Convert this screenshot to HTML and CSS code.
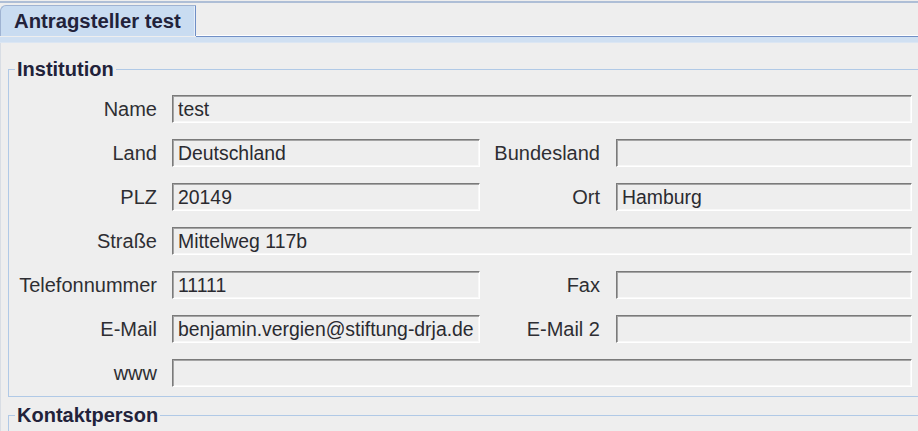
FILE: index.html
```html
<!DOCTYPE html>
<html lang="de">
<head>
<meta charset="utf-8">
<title>Antragsteller test</title>
<link rel="stylesheet" href="styles.css">
</head>
<body>
<div class="tabbar">
  <div class="tab">Antragsteller test</div>
  <div class="tabfill"></div>
</div>
<div class="tabstrip"></div>
<div class="panel">
  <fieldset class="group">
    <legend>Institution</legend>
    <div class="form">
      <label class="lbl">Name</label>
      <input class="field wide" readonly value="test">

      <label class="lbl">Land</label>
      <input class="field" readonly value="Deutschland">
      <label class="lbl lbl2">Bundesland</label>
      <input class="field" readonly value="">

      <label class="lbl">PLZ</label>
      <input class="field" readonly value="20149">
      <label class="lbl lbl2">Ort</label>
      <input class="field" readonly value="Hamburg">

      <label class="lbl">Straße</label>
      <input class="field wide" readonly value="Mittelweg 117b">

      <label class="lbl">Telefonnummer</label>
      <input class="field" readonly value="11111">
      <label class="lbl lbl2">Fax</label>
      <input class="field" readonly value="">

      <label class="lbl">E-Mail</label>
      <input class="field" readonly value="benjamin.vergien@stiftung-drja.de">
      <label class="lbl lbl2">E-Mail 2</label>
      <input class="field" readonly value="">

      <label class="lbl">www</label>
      <input class="field wide" readonly value="">
    </div>
  </fieldset>
  <fieldset class="group group2">
    <legend>Kontaktperson</legend>
    <div class="spacer"></div>
  </fieldset>
</div>
</body>
</html>
```

FILE: styles.css
```css
html, body {
  margin: 0;
  padding: 0;
  background: #eeeeee;
  overflow: hidden;
  width: 918px;
  height: 431px;
  font-family: "Liberation Sans", Arial, sans-serif;
}

.tabbar {
  display: flex;
  margin-top: 1px;
  border-top: 2px solid #aebed6;
  padding-top: 2px;
  height: 32px;
}

.tab {
  width: 196px;
  height: 31px;
  box-sizing: border-box;
  background: #c9dcf1;
  border-top: 1px solid #9fb3d2;
  border-left: 1px solid #9fb3d2;
  border-right: 1px solid #6f8fc6;
  border-top-left-radius: 6px;
  box-shadow: inset -1px 0 0 #e6eef8;
  font-weight: bold;
  font-size: 20.3px;
  line-height: 30px;
  color: #22223a;
  padding-left: 13px;
  white-space: nowrap;
}

.tabfill {
  flex: 1;
  border-bottom: 1px solid #7190c6;
  box-shadow: inset 0 -1px 0 #ffffff;
}

.tabstrip {
  height: 5px;
  background: #d0e0f2;
  border-bottom: 1px solid #dbe6f3;
}

.panel {
  padding: 14px 0 0 8px;
  box-shadow: inset 1px 0 0 #d8dde4;
}

.group {
  margin: 0;
  border: 1px solid #b0c9e6;
  padding: 14px 0 9px 6px;
  width: 940px;
  box-sizing: border-box;
}

.group legend {
  font-weight: bold;
  font-size: 20px;
  line-height: 24px;
  color: #22223a;
  padding: 0 2px;
}

.group2 {
  margin-top: 6px;
}

.spacer {
  height: 40px;
}

.form {
  display: grid;
  grid-template-columns: 157px 308px 136px 296px;
  grid-auto-rows: 28px;
  row-gap: 16px;
  align-items: center;
}

.lbl {
  text-align: right;
  padding-right: 15px;
  font-size: 20px;
  color: #2e2e33;
  white-space: nowrap;
}

.lbl2 {
  padding-right: 16px;
}

.field {
  height: 28px;
  box-sizing: border-box;
  margin: 0;
  padding: 0 0 0 5px;
  font-family: "Liberation Sans", Arial, sans-serif;
  font-size: 19.4px;
  color: #2a2a30;
  background: #eeeeee;
  border-style: solid;
  border-width: 1px;
  border-color: #7a7a7a #ffffff #ffffff #7a7a7a;
  box-shadow: inset 1px 1px 0 #a4a4a4, inset -1px -1px 0 #f8f8f8;
  outline: none;
  width: 100%;
}

.wide {
  grid-column: 2 / 5;
}
```
